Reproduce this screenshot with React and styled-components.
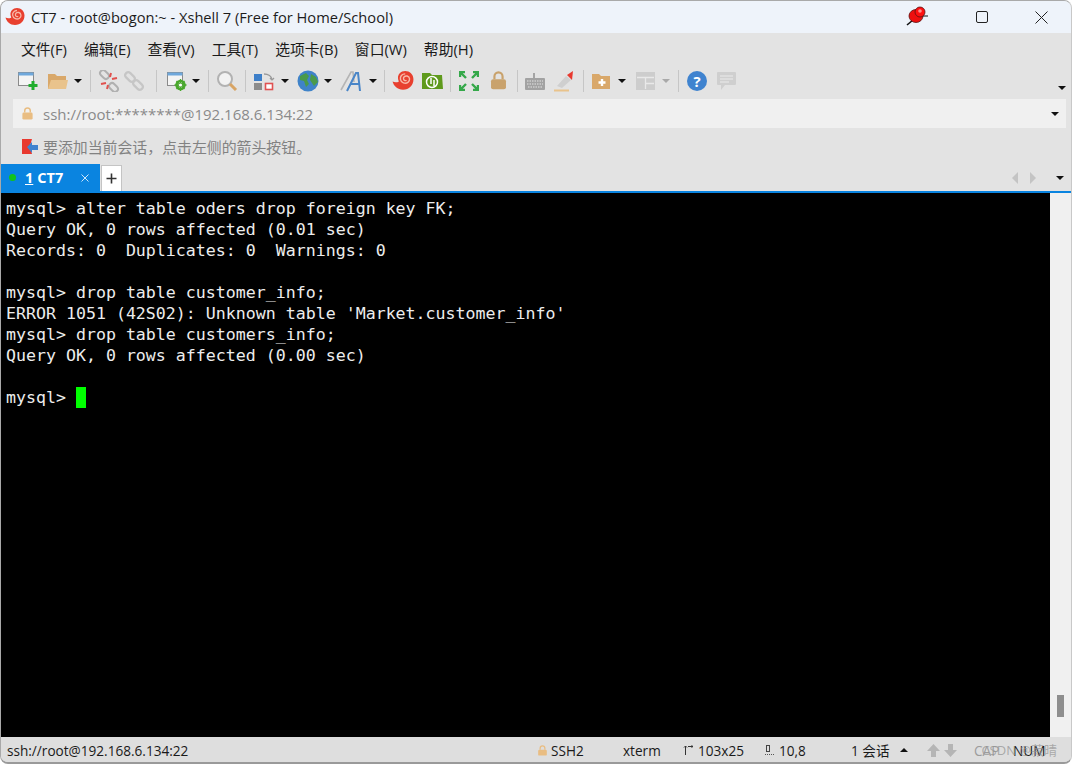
import styled, { createGlobalStyle } from "styled-components";

const GlobalStyle = createGlobalStyle`
  html, body {
    margin: 0;
    padding: 0;
    background: #fff;
  }
`;

const uiFont = `"Open Sans", "Noto Sans CJK SC", sans-serif`;

const Win = styled.div`
  position: relative;
  width: 1072px;
  height: 764px;
  box-sizing: border-box;
  display: flex;
  flex-direction: column;
  overflow: hidden;
  background: #e3e3e3;
  border-top: 1px solid #a9a9a9;
  border-left: 1px solid #a9a9a9;
  border-bottom: 2px solid #9a9a9a;
  border-right: 1px solid #c8c8c8;
  border-radius: 8px;
  font-family: ${uiFont};
`;

const TitleBar = styled.div`
  height: 32px;
  flex: none;
  display: flex;
  align-items: center;
  background: #eef3fa;
  padding-left: 4px;
  color: #1c1c1c;
  font-size: 14.65px;
`;

const TitleText = styled.div`
  margin-left: 6px;
  flex: 1;
  white-space: nowrap;
`;

const WinButton = styled.div`
  width: ${(p) => p.$w}px;
  height: 32px;
  display: flex;
  align-items: center;
  justify-content: center;
  flex: none;
`;

const MenuBar = styled.div`
  height: 31px;
  flex: none;
  display: flex;
  align-items: center;
  padding-left: 20px;
  gap: 17px;
  font-size: 14.8px;
  color: #1a1a1a;
`;

const ToolBar = styled.div`
  position: relative;
  height: 33px;
  flex: none;
  display: flex;
  align-items: center;
  padding-left: 12px;
`;

const Tool = styled.div`
  width: ${(p) => p.$w}px;
  height: 26px;
  flex: none;
  display: flex;
  align-items: center;
  justify-content: center;
`;

const Sep = styled.div`
  width: ${(p) => p.$w}px;
  height: 22px;
  flex: none;
  display: flex;
  justify-content: center;
  &::before {
    content: "";
    width: 1px;
    background: #c6c6c6;
  }
`;

const Caret = styled.div`
  width: 0;
  height: 0;
  flex: none;
  margin-left: ${(p) => p.$l || 0}px;
  margin-right: ${(p) => p.$r || 0}px;
  border-left: 4px solid transparent;
  border-right: 4px solid transparent;
  border-top: 4px solid ${(p) => (p.$off ? "#a9a9a9" : "#111")};
`;

const EndCaret = styled(Caret)`
  position: absolute;
  right: 5px;
  bottom: 7px;
`;

const AddressBar = styled.div`
  height: 29px;
  flex: none;
  margin: 2px 5px 0 12px;
  display: flex;
  align-items: center;
  background: #f0f0f0;
  padding: 0 7px 0 8px;
  color: #8a8a8a;
  font-size: 15px;
`;

const AddressText = styled.div`
  margin-left: 9px;
  flex: 1;
`;

const HintBar = styled.div`
  height: 36px;
  flex: none;
  display: flex;
  align-items: center;
  padding-left: 20px;
  color: #828282;
  font-size: 14.9px;
`;

const HintText = styled.span`
  margin-left: 4px;
`;

const TabRow = styled.div`
  height: 27px;
  flex: none;
  display: flex;
  align-items: stretch;
`;

const ActiveTab = styled.div`
  width: 99px;
  display: flex;
  align-items: center;
  background: #0a84e0;
  color: #fff;
  font-size: 14.5px;
  font-weight: 700;
  padding-left: 8px;
  box-sizing: border-box;
`;

const Dot = styled.span`
  width: 7px;
  height: 7px;
  border-radius: 50%;
  background: #12c31a;
  margin-right: 9px;
`;

const TabNum = styled.span`
  text-decoration: underline;
  margin-right: 4px;
`;

const TabClose = styled.span`
  margin-left: 18px;
  display: flex;
`;

const AddTab = styled.div`
  width: 21px;
  margin: 1px 0 0 1px;
  box-sizing: border-box;
  background: #fff;
  border: 1px solid #c4c4c4;
  border-bottom: 0;
  display: flex;
  align-items: center;
  justify-content: center;
`;

const TabNav = styled.div`
  margin-left: auto;
  display: flex;
  align-items: center;
  padding-right: 7px;
`;

const NavArrow = styled.div`
  width: 0;
  height: 0;
  border-top: 6px solid transparent;
  border-bottom: 6px solid transparent;
  ${(p) => (p.$dir === "left" ? "border-right" : "border-left")}: 6px solid #c4c4c4;
  margin-right: ${(p) => p.$mr}px;
`;

const BlueLine = styled.div`
  height: 2px;
  flex: none;
  background: #0a84e0;
`;

const Body = styled.div`
  flex: 1;
  min-height: 0;
  display: flex;
`;

const Terminal = styled.pre`
  flex: 1;
  margin: 0;
  background: #000;
  color: #ededed;
  padding: 5px 0 0 5px;
  font-family: "DejaVu Sans Mono", monospace;
  font-size: 16.6px;
  line-height: 21px;
`;

const Cursor = styled.span`
  display: inline-block;
  width: 10px;
  height: 21px;
  background: #00ff00;
  vertical-align: top;
`;

const ScrollTrack = styled.div`
  width: 21px;
  flex: none;
  background: #f0f0f0;
  display: flex;
  flex-direction: column;
  align-items: center;
  justify-content: flex-end;
  padding-bottom: 20px;
`;

const ScrollThumb = styled.div`
  width: 7px;
  height: 22px;
  background: #8e8e8e;
`;

const StatusBar = styled.div`
  height: 25px;
  box-sizing: border-box;
  padding-top: 1px;
  flex: none;
  display: flex;
  align-items: center;
  background: #dedede;
  color: #1a1a1a;
  font-size: 13.6px;
  position: relative;
`;

const StatusCell = styled.div`
  position: relative;
  width: ${(p) => p.$w}px;
  flex: none;
  display: flex;
  align-items: center;
  gap: ${(p) => p.$gap || 0}px;
  padding-left: ${(p) => p.$pl || 0}px;
  box-sizing: border-box;
  white-space: nowrap;
  color: ${(p) => (p.$dim ? "#9c9c9c" : "inherit")};
`;

const StatusCaret = styled.div`
  width: 0;
  height: 0;
  margin-left: 10px;
  border-left: 4px solid transparent;
  border-right: 4px solid transparent;
  border-bottom: 4px solid #111;
`;

const Watermark = styled.div`
  position: absolute;
  right: 14px;
  top: 3px;
  color: rgba(150, 150, 150, 0.75);
  font-size: 13px;
  white-space: nowrap;
`;

const SnailIcon = ({ size = 20 }) => (
  <svg width={size} height={size} viewBox="0 0 20 20">
    <path d="M0.500 10.500c1 4 4.500 7.500 9.500 7.500 5.500 0 9.500-4 9.500-9.500C19.500 4 16 1 12 1 8 1 5 4 5.500 8c.1.9.4 1.700.8 2.400C4.500 11.500 2.500 11.500.5 10.500z" fill="#e8402f" />
    <path d="M12 3.500c-3 0-4.800 2.500-4.300 5 .5 3 4.300 4.500 6.800 2.700 2.300-1.700 1.800-5-.7-5.700-2-.5-3.800 1-3.300 2.800.3 1.200 1.800 1.700 2.700 1" fill="none" stroke="#f8b8a8" strokeWidth="1.300" />
  </svg>
);

const LockIcon = ({ color = "#e9bd82", size = 14 }) => (
  <svg width={size} height={size} viewBox="0 0 14 14">
    <path d="M4 6V4a3 3 0 0 1 6 0v2" fill="none" stroke={color} strokeWidth="1.6" />
    <rect x="1.5" y="6" width="11" height="7.5" rx="1.5" fill={color} />
  </svg>
);

function PinIcon() {
  return (
    <svg width="26" height="24" viewBox="0 0 26 24">
      <path d="M2 20l6-5" stroke="#111" strokeWidth="1.6" />
      <path d="M16 11h7" stroke="#111" strokeWidth="1" />
      <ellipse cx="11" cy="11" rx="7" ry="6.5" fill="#ee0f0f" stroke="#5a1010" strokeWidth=".8" />
      <circle cx="15" cy="7" r="5" fill="#ff1010" stroke="#5a1010" strokeWidth=".8" />
      <circle cx="15" cy="6" r="1.8" fill="#ff8c8c" />
    </svg>
  );
}

function NewIcon() {
  return (
    <svg width="22" height="22" viewBox="0 0 22 22">
      <rect x="1.5" y="2.5" width="15" height="13" fill="#f4f4f4" stroke="#8a8a8a" />
      <rect x="1.5" y="2.5" width="15" height="3" fill="#6fa8dc" />
      <path d="M16 11v9M11.500 15.500h9" stroke="#1fad2c" strokeWidth="3" />
    </svg>
  );
}

function FolderIcon({ plus }) {
  return (
    <svg width="22" height="20" viewBox="0 0 22 20">
      <path d="M1 3h7l2 2h9v13H1z" fill="#d9a86a" />
      {plus ? (
        <path d="M11 8v7M7.500 11.500h7" stroke="#fff" strokeWidth="2.400" />
      ) : (
        <path d="M1 18l3-9h17l-2 9z" fill="#e9c38c" />
      )}
    </svg>
  );
}

function BreakIcon() {
  return (
    <svg width="22" height="22" viewBox="0 0 22 22" fill="none">
      <rect x="1.500" y="1.500" width="10" height="6" rx="3" transform="rotate(45 6.500 4.500)" stroke="#b0b0b0" strokeWidth="2" />
      <rect x="10.500" y="14.500" width="10" height="6" rx="3" transform="rotate(45 15.500 17.500)" stroke="#b0b0b0" strokeWidth="2" />
      <path d="M13 3l-1 4M19 8l-5 1M3 14l5-1M9 19l1-4" stroke="#e0524f" strokeWidth="2" />
    </svg>
  );
}

function LinkIcon() {
  return (
    <svg width="22" height="22" viewBox="0 0 22 22" fill="none" stroke="#c6c6c6" strokeWidth="2.200">
      <rect x="1.500" y="4" width="11" height="6" rx="3" transform="rotate(45 7 7)" />
      <rect x="9.500" y="12" width="11" height="6" rx="3" transform="rotate(45 15 15)" />
    </svg>
  );
}

function PropsIcon() {
  return (
    <svg width="22" height="22" viewBox="0 0 22 22">
      <rect x="1.500" y="2.500" width="15" height="13" fill="#f4f4f4" stroke="#8a8a8a" />
      <rect x="1.500" y="2.500" width="15" height="3" fill="#6fa8dc" />
      <circle cx="14.500" cy="15" r="4" fill="none" stroke="#49a82c" strokeWidth="2.500" />
      <path d="M14.500 9v12M8.500 15h12M10.500 11l8 8M18.500 11l-8 8" stroke="#49a82c" strokeWidth="1.400" />
      <circle cx="14.500" cy="15" r="1.600" fill="#fff" />
    </svg>
  );
}

function SearchIcon() {
  return (
    <svg width="22" height="22" viewBox="0 0 22 22" fill="none">
      <circle cx="9" cy="9" r="7" fill="#f2f2f2" stroke="#b2b2b2" strokeWidth="2" />
      <path d="M14 14l6 6" stroke="#d8a464" strokeWidth="3" />
    </svg>
  );
}

function TransferIcon() {
  return (
    <svg width="22" height="22" viewBox="0 0 22 22" fill="none">
      <rect x="1" y="4" width="8" height="7" fill="#3d7fc9" />
      <rect x="1" y="13" width="8" height="7" fill="#8c8c8c" />
      <rect x="12.500" y="13.500" width="7" height="6" fill="#fff" stroke="#e05252" strokeWidth="1.600" />
      <path d="M11 4c4 0 8 2 8 6M19 10l-2-2M19 10l2-2" stroke="#9a9a9a" strokeWidth="1.300" />
    </svg>
  );
}

function GlobeIcon() {
  return (
    <svg width="22" height="22" viewBox="0 0 22 22">
      <circle cx="11" cy="11" r="10.500" fill="#3f83c9" />
      <path d="M3 6l6-3 3 3-2 4 2 4-3 3-2-6-4-1zM14 4l5 3 2 5-4 4-2-3-2-3z" fill="#4a9a4a" />
    </svg>
  );
}

function FontIcon() {
  return (
    <svg width="24" height="22" viewBox="0 0 24 22" fill="none">
      <path d="M1 20L11 2h2l1 10" stroke="#b5b5b5" strokeWidth="1.600" />
      <path d="M7 21L16 3h2l2 18M10 14h9" stroke="#4a86c8" strokeWidth="2" />
    </svg>
  );
}

function XftpIcon() {
  return (
    <svg width="21" height="18" viewBox="0 0 21 18">
      <path d="M0 1h8l2 2h10l1 14H0z" fill="#5f9a1c" />
      <circle cx="10" cy="10" r="5.500" fill="none" stroke="#fff" strokeWidth="1.500" />
      <path d="M9 6v6M12 8v6" stroke="#fff" strokeWidth="1.500" />
    </svg>
  );
}

function FullIcon() {
  return (
    <svg width="20" height="20" viewBox="0 0 20 20" fill="none" stroke="#35a84a" strokeWidth="2.400">
      <path d="M1 6V1h5M14 1h5v5M1 14v5h5M19 14v5h-5M2 2l5 5M18 2l-5 5M2 18l5-5M18 18l-5-5" />
    </svg>
  );
}

function KeyboardIcon() {
  return (
    <svg width="22" height="20" viewBox="0 0 22 20">
      <path d="M10 7V2" stroke="#8f8f8f" strokeWidth="1.500" />
      <rect x="1" y="7" width="20" height="12" rx="1" fill="#a2a2a2" />
      <path d="M3 10h16M3 13h16M4 16h14" stroke="#e4e4e4" strokeWidth="1" strokeDasharray="1.500 1" />
    </svg>
  );
}

function PenIcon() {
  return (
    <svg width="22" height="22" viewBox="0 0 22 22">
      <path d="M1 20.500h15" stroke="#e9c38c" strokeWidth="2" />
      <path d="M4 16l9-10 5 4-9 8z" fill="#cfcfcf" />
      <path d="M14 5l6-4-1 9z" fill="#e8392f" />
    </svg>
  );
}

function LayoutIcon() {
  return (
    <svg width="19" height="18" viewBox="0 0 19 18">
      <rect x="0" y="0" width="19" height="18" fill="#cdcdcd" />
      <path d="M1 5.500h17M9.500 6v11M10 11.500h8" stroke="#e9e9e9" strokeWidth="1.300" />
    </svg>
  );
}

function HelpIcon() {
  return (
    <svg width="22" height="22" viewBox="0 0 22 22">
      <circle cx="11" cy="11" r="10" fill="#3f83cf" />
      <text x="11" y="16.500" textAnchor="middle" fontSize="15" fontWeight="700" fill="#fff" fontFamily="Open Sans, sans-serif">?</text>
    </svg>
  );
}

function ChatIcon() {
  return (
    <svg width="21" height="20" viewBox="0 0 21 20">
      <path d="M2 1h17a1 1 0 0 1 1 1v11a1 1 0 0 1-1 1H9l-4 5v-5H2a1 1 0 0 1-1-1V2a1 1 0 0 1 1-1z" fill="#cfcfcf" />
      <path d="M4 5h13M4 8h13M4 11h9" stroke="#ececec" strokeWidth="1.200" />
    </svg>
  );
}

function HintIcon() {
  return (
    <svg width="18" height="17" viewBox="0 0 18 17">
      <path d="M1 1h10L9 8l2 8H1z" fill="#e8392f" />
      <path d="M6 9l5-5v3h6v5h-6v3z" fill="#3f83cf" />
    </svg>
  );
}

function ResizeIcon() {
  return (
    <svg width="10" height="10" viewBox="0 0 10 10" fill="none" stroke="#333" strokeWidth="1">
      <path d="M2.500 10V1M1 2.500L2.500 1 4 2.500M10 1.500H5M8.500 .5l1.500 1-1.500 1" />
    </svg>
  );
}

function CursorPosIcon() {
  return (
    <svg width="10" height="10" viewBox="0 0 10 10" fill="none">
      <rect x="1.500" y="0.500" width="3" height="6" stroke="#444" />
      <path d="M0 9.500h10" stroke="#555" strokeDasharray="1 1" />
    </svg>
  );
}

function SmallArrow({ down }) {
  return (
    <svg width="13" height="13" viewBox="0 0 13 13">
      <path d={down ? "M4 0h5v6h4l-6.500 7L0 6h4z" : "M4 13h5V7h4L6.500 0 0 7h4z"} fill="#b5b5b5" />
    </svg>
  );
}

const terminalText = `mysql> alter table oders drop foreign key FK;
Query OK, 0 rows affected (0.01 sec)
Records: 0  Duplicates: 0  Warnings: 0

mysql> drop table customer_info;
ERROR 1051 (42S02): Unknown table 'Market.customer_info'
mysql> drop table customers_info;
Query OK, 0 rows affected (0.00 sec)

mysql> `;

const menus = ["文件(F)", "编辑(E)", "查看(V)", "工具(T)", "选项卡(B)", "窗口(W)", "帮助(H)"];

export default function App() {
  return (
    <>
      <GlobalStyle />
      <Win>
        <TitleBar>
          <SnailIcon />
          <TitleText>CT7 - root@bogon:~ - Xshell 7 (Free for Home/School)</TitleText>
          <WinButton $w={26}>
            <PinIcon />
          </WinButton>
          <WinButton $w={22} />
          <WinButton $w={58}>
            <svg width="12" height="12" viewBox="0 0 12 12" fill="none">
              <rect x=".5" y=".5" width="11" height="11" rx="1.500" stroke="#222" />
            </svg>
          </WinButton>
          <WinButton $w={60}>
            <svg width="13" height="13" viewBox="0 0 13 13" fill="none">
              <path d="M.5 .5l12 12M12.500 .5l-12 12" stroke="#222" />
            </svg>
          </WinButton>
        </TitleBar>
        <MenuBar>
          {menus.map((m) => (
            <span key={m}>{m}</span>
          ))}
        </MenuBar>
        <ToolBar>
          <Tool $w={29}><NewIcon /></Tool>
          <Tool $w={31}><FolderIcon /></Tool>
          <Caret $l={1} $r={2} />
          <Sep $w={12} />
          <Tool $w={26}><BreakIcon /></Tool>
          <Tool $w={24}><LinkIcon /></Tool>
          <Sep $w={20} />
          <Tool $w={22}><PropsIcon /></Tool>
          <Caret $l={4} $r={4} />
          <Sep $w={8} />
          <Tool $w={30}><SearchIcon /></Tool>
          <Sep $w={6} />
          <Tool $w={32}><TransferIcon /></Tool>
          <Caret $l={1} $r={4} />
          <Tool $w={30}><GlobeIcon /></Tool>
          <Caret $l={1} $r={5} />
          <Tool $w={30}><FontIcon /></Tool>
          <Caret $l={2} $r={2} />
          <Sep $w={10} />
          <Tool $w={28}><SnailIcon size={22} /></Tool>
          <Tool $w={30}><XftpIcon /></Tool>
          <Sep $w={6} />
          <Tool $w={32}><FullIcon /></Tool>
          <Tool $w={26}><LockIcon color="#c9a26c" size={19} /></Tool>
          <Sep $w={12} />
          <Tool $w={24}><KeyboardIcon /></Tool>
          <Tool $w={33}><PenIcon /></Tool>
          <Sep $w={7} />
          <Tool $w={30}><FolderIcon plus /></Tool>
          <Caret $l={1} $r={4} />
          <Tool $w={30}><LayoutIcon /></Tool>
          <Caret $off $l={2} $r={2} />
          <Sep $w={12} />
          <Tool $w={26}><HelpIcon /></Tool>
          <Tool $w={32}><ChatIcon /></Tool>
          <EndCaret />
        </ToolBar>
        <AddressBar>
          <LockIcon size={13} />
          <AddressText>ssh://root:********@192.168.6.134:22</AddressText>
          <Caret />
        </AddressBar>
        <HintBar>
          <HintIcon />
          <HintText>要添加当前会话，点击左侧的箭头按钮。</HintText>
        </HintBar>
        <TabRow>
          <ActiveTab>
            <Dot />
            <TabNum>1</TabNum>CT7
            <TabClose>
              <svg width="8" height="8" viewBox="0 0 8 8" fill="none">
                <path d="M.5 .5l7 7M7.500 .5l-7 7" stroke="#cfe6fa" />
              </svg>
            </TabClose>
          </ActiveTab>
          <AddTab>
            <svg width="11" height="11" viewBox="0 0 11 11" fill="none">
              <path d="M5.500 .5v10M.5 5.500h10" stroke="#333" strokeWidth="1.600" />
            </svg>
          </AddTab>
          <TabNav>
            <NavArrow $dir="left" $mr={12} />
            <NavArrow $dir="right" $mr={20} />
            <Caret />
          </TabNav>
        </TabRow>
        <BlueLine />
        <Body>
          <Terminal>
            {terminalText}
            <Cursor />
          </Terminal>
          <ScrollTrack>
            <ScrollThumb />
          </ScrollTrack>
        </Body>
        <StatusBar>
          <StatusCell $w={536} $pl={6}>ssh://root@192.168.6.134:22</StatusCell>
          <StatusCell $w={86} $gap={3}>
            <LockIcon size={11} />
            SSH2
          </StatusCell>
          <StatusCell $w={58}>xterm</StatusCell>
          <StatusCell $w={83} $pl={2} $gap={5}>
            <ResizeIcon />
            103x25
          </StatusCell>
          <StatusCell $w={87} $pl={1} $gap={4}>
            <CursorPosIcon />
            10,8
          </StatusCell>
          <StatusCell $w={76}>
            1 会话
            <StatusCaret />
          </StatusCell>
          <StatusCell $w={47} $gap={4}>
            <SmallArrow />
            <SmallArrow down />
          </StatusCell>
          <StatusCell $w={39} $dim>CAP</StatusCell>
          <StatusCell $w={40}>NUM</StatusCell>
          <Watermark>CSDN @菽晴</Watermark>
        </StatusBar>
      </Win>
    </>
  );
}
